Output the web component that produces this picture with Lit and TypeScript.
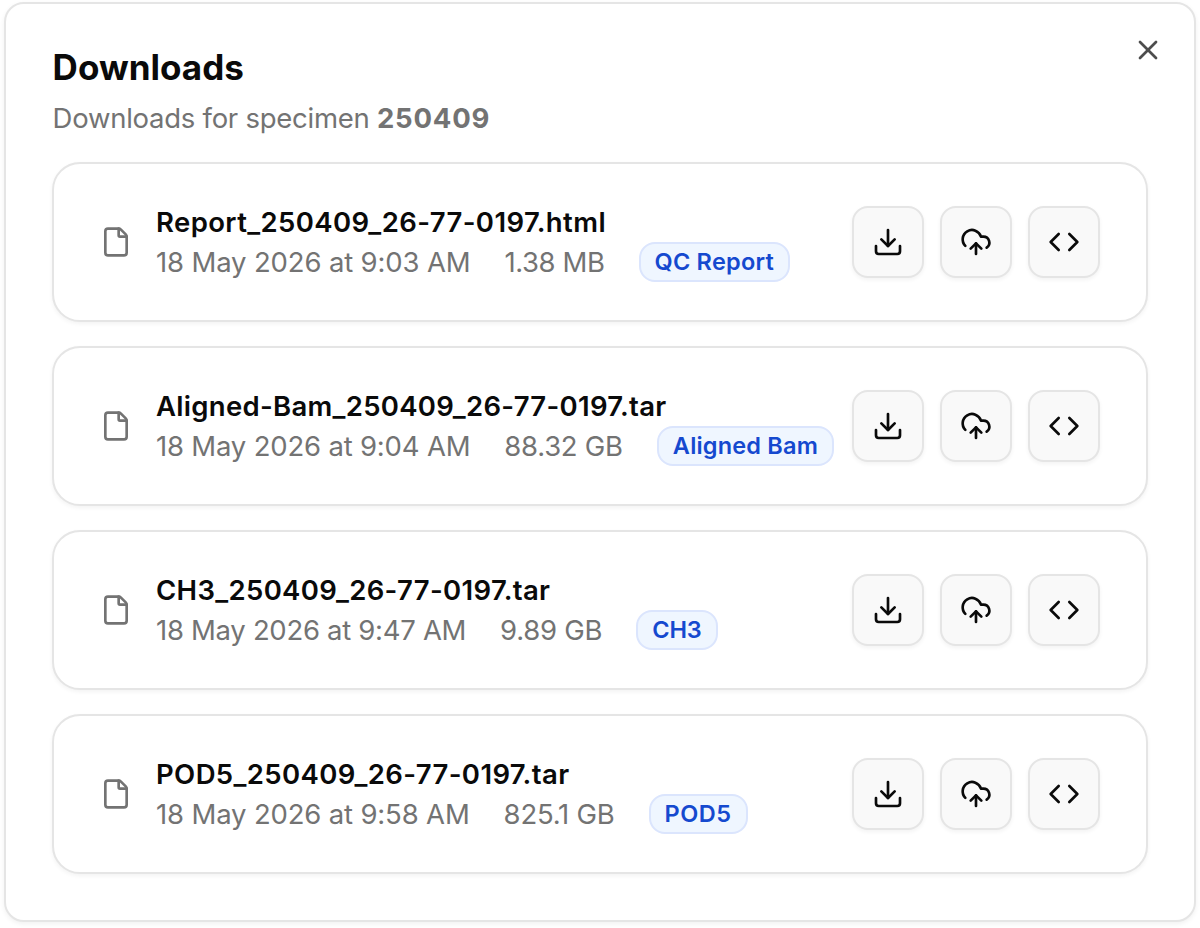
import { LitElement, html, css, svg } from "lit";
import { customElement, property } from "lit/decorators.js";
import { styleMap } from "lit/directives/style-map.js";

interface Label {
  text: string;
  tracking: number;
}

interface FileEntry {
  name: Label;
  date: Label;
  size: Label;
  tag: Label;
}

const label = (text: string, tracking = 0): Label => ({ text, tracking });

const files: FileEntry[] = [
  {
    name: label("Report_250409_26-77-0197.html", 0.4),
    date: label("18 May 2026 at 9:03 AM", -0.15),
    size: label("1.38 MB", -0.41),
    tag: label("QC Report", 0.24),
  },
  {
    name: label("Aligned-Bam_250409_26-77-0197.tar", 0.29),
    date: label("18 May 2026 at 9:04 AM", -0.19),
    size: label("88.32 GB", -0.26),
    tag: label("Aligned Bam", 0.19),
  },
  {
    name: label("CH3_250409_26-77-0197.tar", 0.34),
    date: label("18 May 2026 at 9:47 AM", -0.3),
    size: label("9.89 GB", -0.28),
    tag: label("CH3", -0.05),
  },
  {
    name: label("POD5_250409_26-77-0197.tar", 0.38),
    date: label("18 May 2026 at 9:58 AM", -0.16),
    size: label("825.1 GB", -0.22),
    tag: label("POD5", 0.52),
  },
];

const icons = {
  file: svg`<path d="M6 22a2 2 0 0 1-2-2V4a2 2 0 0 1 2-2h8a2.4 2.4 0 0 1 1.704.706l3.588 3.588A2.4 2.4 0 0 1 20 8v12a2 2 0 0 1-2 2z"/><path d="M14 2v5a1 1 0 0 0 1 1h5"/>`,
  download: svg`<path d="M12 15V3"/><path d="M21 15v4a2 2 0 0 1-2 2H5a2 2 0 0 1-2-2v-4"/><path d="m7 10 5 5 5-5"/>`,
  upload: svg`<path d="M12 13v8"/><path d="M4 14.899A7 7 0 1 1 15.71 8h1.79a4.5 4.5 0 0 1 2.5 8.242"/><path d="m8 17 4-4 4 4"/>`,
  code: svg`<path d="m16 18 6-6-6-6"/><path d="m8 6-6 6 6 6"/>`,
  close: svg`<path d="M18 6 6 18"/><path d="m6 6 12 12"/>`,
};

@customElement("line-icon")
export class LineIcon extends LitElement {
  @property() name: keyof typeof icons = "file";

  static styles = css`
    :host { display: block; width: 32px; height: 32px; flex: none; }
    .glyph {
      display: block;
      width: 100%;
      height: 100%;
      fill: none;
      stroke: currentColor;
      stroke-width: 2;
      stroke-linecap: round;
      stroke-linejoin: round;
    }
  `;

  render() {
    return html`<svg class="glyph" viewBox="0 0 24 24" aria-hidden="true">${icons[this.name]}</svg>`;
  }
}

@customElement("file-row")
export class FileRow extends LitElement {
  @property({ attribute: false }) file!: FileEntry;

  static styles = css`
    :host { display: block; min-width: 0; }
    .row {
      box-sizing: border-box;
      height: 160px;
      display: flex;
      align-items: center;
      padding: 0 46px;
      border: 2px solid #e5e5e5;
      border-radius: 28px;
      background: #fff;
      box-shadow: 0 2px 4px rgba(0, 0, 0, 0.05);
    }
    .file-icon { color: #737373; margin-right: 24px; }
    .info { flex: 1; min-width: 0; white-space: nowrap; line-height: 40px; font-size: 27.5px; }
    .name { font-weight: 600; color: #0a0a0a; }
    .meta { display: flex; align-items: center; gap: 34px; height: 40px; color: #737373; }
    .tag {
      box-sizing: border-box;
      height: 40px;
      padding: 0 14px;
      border: 2px solid #dbe5fd;
      border-radius: 16px;
      background: #eff6ff;
      color: #1549cf;
      font-size: 23.5px;
      font-weight: 600;
      line-height: 35px;
    }
    .actions { display: flex; gap: 16px; flex: none; }
    .action {
      box-sizing: border-box;
      width: 72px;
      height: 72px;
      display: grid;
      place-items: center;
      padding: 0;
      border: 2px solid #e5e5e5;
      border-radius: 16px;
      background: #f9f9f9;
      color: #0a0a0a;
      box-shadow: 0 2px 4px rgba(0, 0, 0, 0.05);
    }
  `;

  private text(cls: string, l: Label) {
    return html`<div class=${cls} style=${styleMap({ letterSpacing: `${l.tracking}px` })}>${l.text}</div>`;
  }

  render() {
    const f = this.file;
    return html`
      <div class="row">
        <line-icon class="file-icon" name="file"></line-icon>
        <div class="info">
          ${this.text("name", f.name)}
          <div class="meta">
            ${this.text("date", f.date)} ${this.text("size", f.size)} ${this.text("tag", f.tag)}
          </div>
        </div>
        <div class="actions">
          <button class="action" aria-label="Download"><line-icon name="download"></line-icon></button>
          <button class="action" aria-label="Upload"><line-icon name="upload"></line-icon></button>
          <button class="action" aria-label="Code"><line-icon name="code"></line-icon></button>
        </div>
      </div>
    `;
  }
}

@customElement("app-root")
export class AppRoot extends LitElement {
  static styles = css`
    :host {
      display: block;
      box-sizing: border-box;
      height: 928px;
      padding: 2px 4px 6px;
      background: #fff;
      font-family: Inter, sans-serif;
    }
    .dialog {
      position: relative;
      box-sizing: border-box;
      height: 920px;
      padding: 45px 46px 46px;
      border: 2px solid #e5e5e5;
      border-radius: 20px;
      background: #fff;
      box-shadow: 0 2px 5px rgba(0, 0, 0, 0.06);
    }
    .title {
      margin: 0 0 0 0.6px;
      font-size: 35px;
      font-weight: 650;
      line-height: 36px;
      letter-spacing: 0.03px;
      color: #0a0a0a;
    }
    .subtitle {
      margin: 13px 0 24px 0.6px;
      font-size: 27.5px;
      line-height: 40px;
      letter-spacing: -0.26px;
      color: #737373;
    }
    .specimen { font-weight: 700; letter-spacing: 0.78px; }
    .list { display: grid; grid-template-columns: minmax(0, 1fr); gap: 24px; }
    .close {
      position: absolute;
      top: 30px;
      right: 30px;
      padding: 0;
      border: 0;
      background: none;
      color: #4d4d4d;
    }
  `;

  render() {
    return html`
      <section class="dialog" role="dialog" aria-label="Downloads">
        <h1 class="title">Downloads</h1>
        <p class="subtitle">Downloads for specimen <strong class="specimen">250409</strong></p>
        <div class="list">${files.map((f) => html`<file-row .file=${f}></file-row>`)}</div>
        <button class="close" aria-label="Close"><line-icon name="close"></line-icon></button>
      </section>
    `;
  }
}
